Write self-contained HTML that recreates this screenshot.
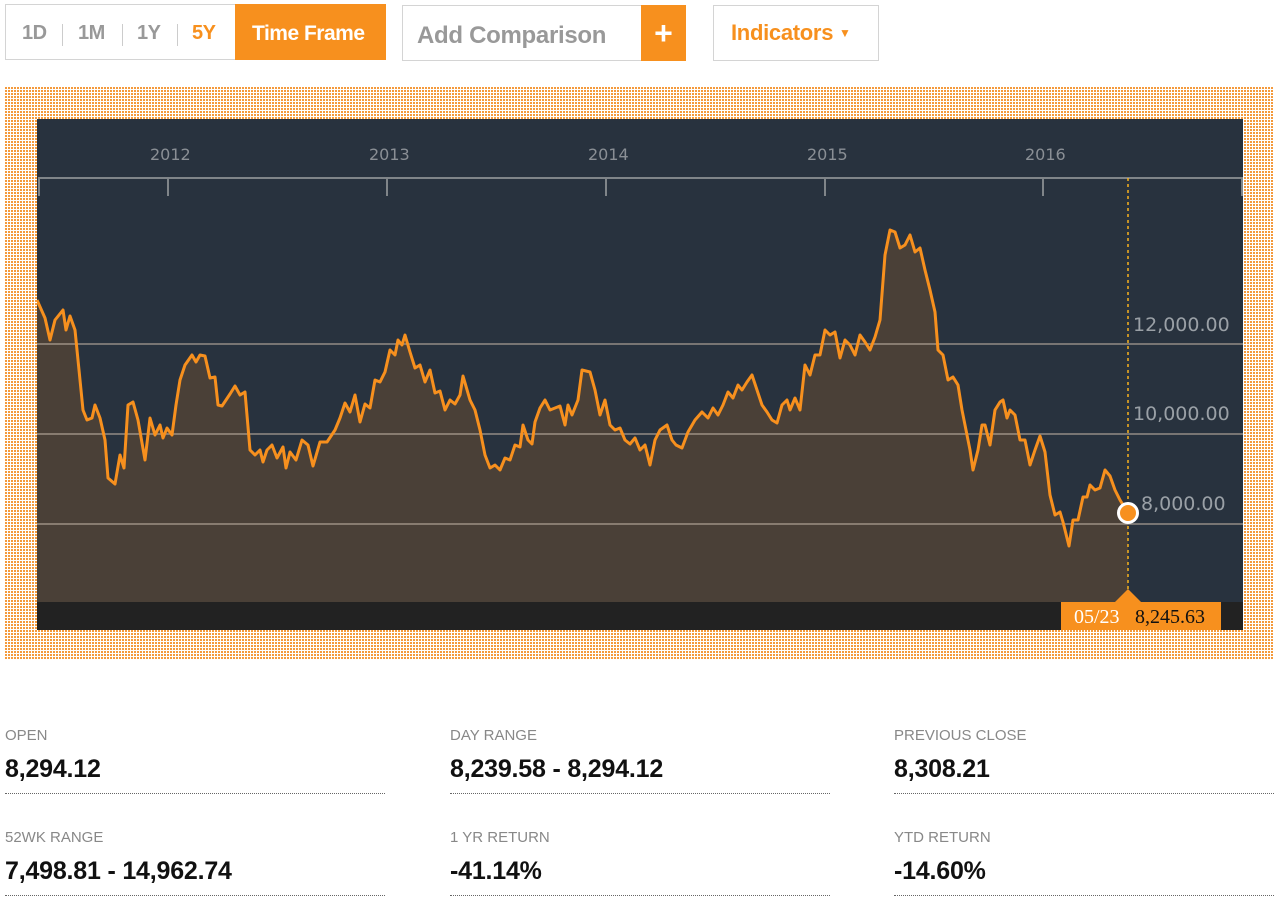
<!DOCTYPE html>
<html><head><meta charset="utf-8"><style>
body{margin:0;width:1280px;height:905px;background:#fff;font-family:"Liberation Sans",Arial,sans-serif;position:relative;overflow:hidden}
.a{position:absolute}
.tf{left:5px;top:4px;width:380px;height:56px;border:1px solid #d4d4d4;box-sizing:border-box}
.tf span{position:absolute;top:17px;font-size:20px;font-weight:bold;color:#999;letter-spacing:-0.5px}
.sep{position:absolute;top:19px;width:1px;height:22px;background:#ccc}
.dots{left:4px;top:86px;width:1270px;height:574px;background-color:#f49a3c;background-image:linear-gradient(90deg,#fff 1px,transparent 1px),linear-gradient(#fff 1px,transparent 1px);background-size:3px 3px}
.lab{font-size:15px;color:#888}
.val{font-size:25px;font-weight:bold;color:#111;letter-spacing:-0.2px}
.ul{height:0;border-top:1px dotted #666;width:380px}
</style></head><body>
<div class="a tf">
<span style="left:16px">1D</span><div class="sep" style="left:56px"></div>
<span style="left:72px">1M</span><div class="sep" style="left:116px"></div>
<span style="left:131px">1Y</span><div class="sep" style="left:171px"></div>
<span style="left:186px;color:#f7901e">5Y</span>
<div class="a" style="left:229px;top:-1px;width:151px;height:56px;background:#f7901e"></div>
<span style="left:246px;color:#fff;font-size:21px">Time Frame</span>
</div>
<div class="a" style="left:402px;top:5px;width:284px;height:56px;border:1px solid #d4d4d4;box-sizing:border-box"></div>
<div class="a" style="left:417px;top:22px;font-size:24px;font-weight:bold;color:#999;letter-spacing:-0.3px">Add Comparison</div>
<div class="a" style="left:641px;top:5px;width:45px;height:56px;background:#f7901e;color:#fff;font-size:32px;font-weight:bold;text-align:center;line-height:56px">+</div>
<div class="a" style="left:713px;top:5px;width:166px;height:56px;border:1px solid #d4d4d4;box-sizing:border-box"></div>
<div class="a" style="left:731px;top:20px;font-size:22px;font-weight:bold;color:#f7901e;letter-spacing:-0.3px">Indicators <span style="font-size:12px;position:relative;top:-3px">▼</span></div>
<div class="a dots"></div>
<svg class="a" style="left:37px;top:119px" width="1206" height="511" viewBox="37 119 1206 511">
<rect x="37" y="119" width="1206" height="511" fill="#28323e"/>
<g fill="#8a8f95" font-family="DejaVu Sans" font-size="16">
<text x="150" y="160">2012</text><text x="369" y="160">2013</text><text x="588" y="160">2014</text><text x="807" y="160">2015</text><text x="1025" y="160">2016</text></g>
<path d="M38,178H1243M39,178V196M168,178V196M387,178V196M606,178V196M825,178V196M1043,178V196M1242,178V196" stroke="#808589" stroke-width="2" fill="none"/>
<polygon fill="#4a4037" points="37,602 37,300 45,318 50,340 55,320 63,310 66,330 70,316 75,330 80,380 83,410 87,420 92,418 95,405 100,418 105,440 108,478 115,484 120,455 124,468 128,405 133,402 138,420 145,460 150,418 155,435 160,425 163,438 167,428 172,435 176,405 180,380 185,365 192,355 196,362 200,355 205,356 210,378 215,377 218,405 222,406 230,394 235,386 240,395 245,392 250,450 255,455 260,450 263,462 267,450 272,445 277,458 283,447 286,468 290,452 296,460 302,440 308,445 313,466 320,442 327,442 335,430 340,418 345,403 350,412 355,395 360,422 365,404 370,408 375,380 380,382 385,372 390,350 395,355 398,340 402,345 405,335 410,352 415,368 420,365 425,382 430,370 435,393 440,391 445,410 450,400 455,404 460,395 463,376 470,400 475,410 480,430 485,455 490,468 495,465 500,470 505,458 510,460 515,445 520,447 523,425 528,440 532,444 535,422 540,408 545,400 550,410 555,408 560,406 565,425 568,405 572,415 578,400 582,370 590,372 595,390 600,415 605,400 610,425 615,430 620,428 625,440 630,444 635,438 640,450 645,445 650,465 655,440 660,430 667,425 672,440 676,445 682,448 688,432 695,420 702,412 708,418 713,408 718,415 723,405 728,392 733,398 738,385 742,390 747,382 752,375 757,390 762,405 767,412 772,420 777,423 782,405 787,400 790,410 795,398 800,410 805,365 810,375 815,355 820,355 825,330 830,335 835,332 840,358 845,340 850,345 855,355 860,335 865,342 870,350 875,337 880,320 885,255 890,230 895,232 900,248 905,245 910,235 915,252 920,248 925,270 930,290 935,312 938,350 943,355 948,380 953,377 958,385 962,410 966,430 970,450 973,470 978,450 982,425 985,425 990,445 995,410 1000,402 1003,400 1007,418 1010,410 1015,415 1020,440 1025,440 1030,465 1035,450 1040,436 1045,452 1050,495 1055,515 1060,512 1063,522 1069,546 1073,520 1078,520 1083,497 1087,497 1090,485 1095,490 1100,488 1105,470 1110,476 1115,490 1120,500 1128,513 1128,602"/>
<path d="M37,344H1243M37,434H1243M37,524H1243" stroke="#c0b2a4" stroke-opacity=".7" stroke-width="1.5"/>
<g fill="#9aa0a6" font-family="DejaVu Sans" font-size="19"><text x="1133" y="331">12,000.00</text><text x="1133" y="420">10,000.00</text><text x="1141" y="510">8,000.00</text></g>
<polyline fill="none" stroke="#f7901e" stroke-width="3" stroke-linejoin="round" points="37,300 45,318 50,340 55,320 63,310 66,330 70,316 75,330 80,380 83,410 87,420 92,418 95,405 100,418 105,440 108,478 115,484 120,455 124,468 128,405 133,402 138,420 145,460 150,418 155,435 160,425 163,438 167,428 172,435 176,405 180,380 185,365 192,355 196,362 200,355 205,356 210,378 215,377 218,405 222,406 230,394 235,386 240,395 245,392 250,450 255,455 260,450 263,462 267,450 272,445 277,458 283,447 286,468 290,452 296,460 302,440 308,445 313,466 320,442 327,442 335,430 340,418 345,403 350,412 355,395 360,422 365,404 370,408 375,380 380,382 385,372 390,350 395,355 398,340 402,345 405,335 410,352 415,368 420,365 425,382 430,370 435,393 440,391 445,410 450,400 455,404 460,395 463,376 470,400 475,410 480,430 485,455 490,468 495,465 500,470 505,458 510,460 515,445 520,447 523,425 528,440 532,444 535,422 540,408 545,400 550,410 555,408 560,406 565,425 568,405 572,415 578,400 582,370 590,372 595,390 600,415 605,400 610,425 615,430 620,428 625,440 630,444 635,438 640,450 645,445 650,465 655,440 660,430 667,425 672,440 676,445 682,448 688,432 695,420 702,412 708,418 713,408 718,415 723,405 728,392 733,398 738,385 742,390 747,382 752,375 757,390 762,405 767,412 772,420 777,423 782,405 787,400 790,410 795,398 800,410 805,365 810,375 815,355 820,355 825,330 830,335 835,332 840,358 845,340 850,345 855,355 860,335 865,342 870,350 875,337 880,320 885,255 890,230 895,232 900,248 905,245 910,235 915,252 920,248 925,270 930,290 935,312 938,350 943,355 948,380 953,377 958,385 962,410 966,430 970,450 973,470 978,450 982,425 985,425 990,445 995,410 1000,402 1003,400 1007,418 1010,410 1015,415 1020,440 1025,440 1030,465 1035,450 1040,436 1045,452 1050,495 1055,515 1060,512 1063,522 1069,546 1073,520 1078,520 1083,497 1087,497 1090,485 1095,490 1100,488 1105,470 1110,476 1115,490 1120,500 1128,513"/>
<line x1="1128" y1="178" x2="1128" y2="590" stroke="#f7b21e" stroke-width="1.5" stroke-dasharray="3,3"/>
<rect x="37" y="602" width="1206" height="28" fill="#222"/>
<rect x="1061" y="602" width="160" height="28" fill="#f7901e"/>
<polygon points="1115,602 1128,589 1141,602" fill="#f7901e"/>
<text x="1074" y="623" fill="#fff" font-family="Liberation Serif" font-size="20">05/23</text>
<text x="1135" y="623" fill="#111" font-family="Liberation Serif" font-size="20">8,245.63</text>
<circle cx="1128" cy="513" r="9.5" fill="#f7901e" stroke="#fff" stroke-width="3"/>
</svg>
<div class="a" style="left:5px;top:727px"><div class="lab">OPEN</div><div class="val" style="margin-top:11px">8,294.12</div><div class="ul" style="margin-top:9px"></div></div>
<div class="a" style="left:450px;top:727px"><div class="lab">DAY RANGE</div><div class="val" style="margin-top:11px">8,239.58 - 8,294.12</div><div class="ul" style="margin-top:9px"></div></div>
<div class="a" style="left:894px;top:727px"><div class="lab">PREVIOUS CLOSE</div><div class="val" style="margin-top:11px">8,308.21</div><div class="ul" style="margin-top:9px"></div></div>
<div class="a" style="left:5px;top:829px"><div class="lab">52WK RANGE</div><div class="val" style="margin-top:11px">7,498.81 - 14,962.74</div><div class="ul" style="margin-top:9px"></div></div>
<div class="a" style="left:450px;top:829px"><div class="lab">1 YR RETURN</div><div class="val" style="margin-top:11px">-41.14%</div><div class="ul" style="margin-top:9px"></div></div>
<div class="a" style="left:894px;top:829px"><div class="lab">YTD RETURN</div><div class="val" style="margin-top:11px">-14.60%</div><div class="ul" style="margin-top:9px"></div></div>
</body></html>
